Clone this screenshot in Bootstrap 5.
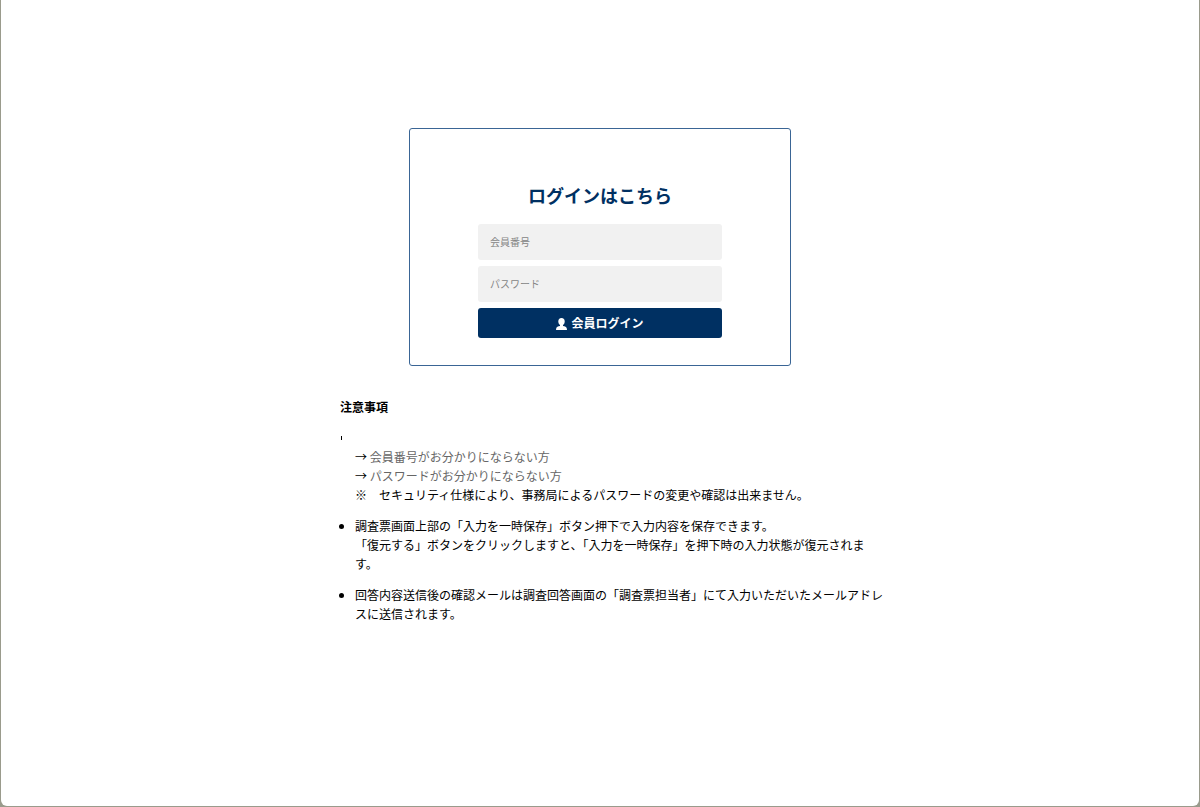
<!DOCTYPE html>
<html lang="ja">
<head>
<meta charset="utf-8">
<meta name="viewport" content="width=device-width, initial-scale=1">
<title>ログイン</title>
<link href="https://cdn.jsdelivr.net/npm/bootstrap@5.3.0/dist/css/bootstrap.min.css" rel="stylesheet">
<style>
  html { background: #9a9b8c; }
  body {
    font-family: "Noto Sans CJK JP", sans-serif;
    font-size: 12px;
    line-height: 19px;
    color: #000;
    background: #9a9b8c;
    padding: 0 1px 1px;
  }
  .page { background: #fff; border-radius: 0 0 6px 6px; padding-top: 128px; min-height: calc(100vh - 1px); }
  .login-card { max-width: 382px; border: 1px solid #3a6595; border-radius: 3px; padding: 53px 68px 27px; }
  .login-title { font-size: 18px; line-height: 26px; color: #003062; margin-bottom: 16px; }
  .login-field, .login-field:focus {
    height: 36px;
    border: 0;
    border-radius: 3px;
    background: #f1f1f1;
    font-size: 10px;
    padding: 0 12px 2px;
  }
  .login-field::placeholder { color: #858585; }
  .login-fields { gap: 6px; }
  .login-btn, .login-btn:hover {
    height: 30px;
    border: 0;
    border-radius: 3px;
    background: #003062;
    color: #fff;
    font-size: 12px;
    line-height: 19px;
    padding: 0 0 2px;
    gap: 4px;
  }
  .notes { max-width: 546px; margin-left: max(0px, calc(50% - 260px)); padding-top: 31px; }
  .notes-title { font-size: 12px; line-height: 19px; margin-bottom: 12px; }
  .notes-list { padding-left: 15px; }
  .notes-list li + li { margin-top: 12px; }
  .notes-list li:first-child { list-style: none; }
  .notes-list a { color: #666; }
  .tick { height: 19px; margin-left: -14px; }
  .tick::before { content: ""; width: 1px; height: 4px; background: #000; }
</style>
</head>
<body>
<main class="page">
  <form class="login-card mx-auto">
    <h1 class="login-title fw-bold text-center">ログインはこちら</h1>
    <div class="login-fields d-flex flex-column">
      <input class="form-control login-field" id="member" type="text" placeholder="会員番号" aria-label="会員番号">
      <input class="form-control login-field" id="pass" type="password" placeholder="パスワード" aria-label="パスワード">
      <button class="btn login-btn fw-bold d-flex align-items-center justify-content-center" type="submit">
        <svg class="mt-1" width="11" height="12" viewBox="0 0 11 12" fill="currentColor" aria-hidden="true"><ellipse cx="5.500" cy="3.600" rx="3.200" ry="3.600"/><path d="M4 6H7V8C9 8.400 10.600 9 10.800 10.500L11 12H0L.2 10.500C.4 9 2 8.400 4 8Z"/></svg>
        <span>会員ログイン</span>
      </button>
    </div>
  </form>
  <section class="notes">
    <h2 class="notes-title fw-bold">注意事項</h2>
    <ul class="notes-list mb-0">
      <li>
        <div class="tick d-flex align-items-center"></div>
        → <a class="text-decoration-none" href="#">会員番号がお分かりにならない方</a><br>
        → <a class="text-decoration-none" href="#">パスワードがお分かりにならない方</a><br>
        ※　セキュリティ仕様により、事務局によるパスワードの変更や確認は出来ません。
      </li>
      <li>調査票画面上部の「入力を一時保存」ボタン押下で入力内容を保存できます。<br>
        「復元する」ボタンをクリックしますと、「入力を一時保存」を押下時の入力状態が復元されま<br>す。</li>
      <li>回答内容送信後の確認メールは調査回答画面の「調査票担当者」にて入力いただいたメールアドレスに送信されます。</li>
    </ul>
  </section>
</main>
<script src="https://cdn.jsdelivr.net/npm/bootstrap@5.3.0/dist/js/bootstrap.bundle.min.js"></script>
</body>
</html>
